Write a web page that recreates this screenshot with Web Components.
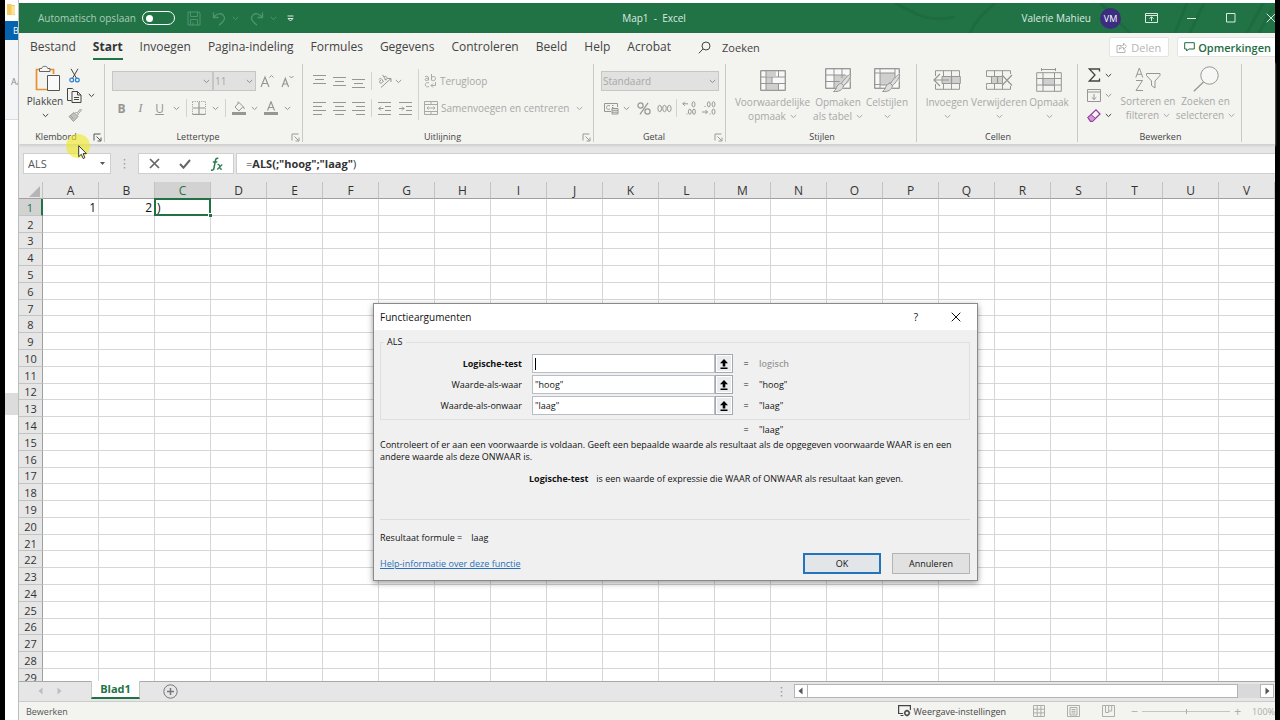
<!DOCTYPE html>
<html lang="nl">
<head>
<meta charset="utf-8">
<title>Map1 - Excel</title>
<style>
  html, body { margin: 0; height: 100%; background: #000; overflow: hidden; }
  body { font-family: "Open Sans", "Noto Sans", sans-serif; font-size: 10px; color: #444; }
</style>
</head>
<body>
<desktop-screen></desktop-screen>

<script>
const RESET = `
  *, *::before, *::after { box-sizing: border-box; }
  button, input, select { font: inherit; color: inherit; margin: 0; padding: 0; border: 0; background: none; border-radius: 0; outline: 0; }
  button { display: flex; align-items: center; justify-content: center; white-space: nowrap; }
`;

class Part extends HTMLElement {
  constructor() {
    super();
    this.attachShadow({ mode: 'open' });
  }
  connectedCallback() {
    if (this.shadowRoot.childNodes.length) return;
    const t = document.createElement('template');
    t.innerHTML = `<style>${RESET}${this.css()}</style>${this.html()}`;
    this.shadowRoot.append(t.content.cloneNode(true));
  }
  css() { return ':host{display:block}'; }
  html() { return '<slot></slot>'; }
  attr(n) { return this.getAttribute(n) || ''; }
}

/* name: [width, height, markup] */
const ICONS = {
  chevron: [7, 5, '<path d="M.8 1l2.7 2.6L6.200 1" />'],
  launcher: [9, 9, '<path d="M1 7.500V1h6.500M3.500 3.500l4 4M8 4.500V8H4.500"/>'],
  folder: [8, 11, '<path d="M0 0h4l1 1h3v10H0z" fill="#f4c95d" stroke="none"/><path d="M4.500 2h3.500v8l-3.500 1z" fill="#fbe29a" stroke="none"/>'],
  save: [14, 15, '<path d="M1 1h11l1 1v12H1zM3.500 1v4.500h7V1M3.500 14V8.500h7V14M6 14v-2.500"/>'],
  undo: [14, 15, '<path d="M1.500 1.500v5h5M1.500 6.500C4 3 8.500 1.500 11 4c2.500 2.500 1.500 5-.5 7L7 14.300" stroke-width="1.300"/>'],
  redo: [14, 15, '<path d="M12.500 1.500v5h-5M12.500 6.500C10 3 5.500 1.500 3 4C.5 6.500 1.500 9 3.500 11L7 14.300" stroke-width="1.300"/>'],
  customize: [7, 7, '<path d="M.5 1h6M1 3.500l2.500 2.500L6 3.500z"/>'],
  ribbonopts: [13, 11, '<path d="M.5.5h12v9H.5zM.5 2.500h12M6.500 8V4M4.500 5.700l2-2 2 2"/>'],
  minimize: [10, 10, '<path d="M1 5.500h9"/>'],
  maximize: [10, 10, '<path d="M.5.5h8.500v8.500H.5z"/>'],
  close: [10, 10, '<path d="M.7.7l8.600 8.600M9.300.7L.7 9.300"/>'],
  search: [13, 13, '<circle cx="8" cy="5" r="4"/><path d="M5 8L.8 12.300"/>'],
  share: [11, 11, '<path d="M5 3.500H1v7h8V7.500M3.300 7.500C3.500 4.500 5.500 3.300 7.500 3.300V1l3 3.300-3 3.200V5.500c-2 0-3 .5-4.200 2z"/>'],
  comment: [11, 10, '<path d="M.7.7h9.600v6.300H4.700L2.700 9V7H.7z"/>'],
  paste: [32, 28, '<g transform="translate(6 0)"><path d="M5 4.500H1.500v20h11M14 4.500h4.500V9" stroke="#e8912d" stroke-width="1.700"/><path d="M4.500 6.500v-3h2.200C7 .6 12.500.6 12.800 3.500H15v3z" fill="#f5f5f2" stroke="#666"/><path d="M12.500 10.500h12v15h-12z" fill="#fafafa" stroke="#555"/></g>'],
  cut: [11, 15, '<path d="M2 .8l5.500 9.500M9 .8L3.500 10.300" stroke="#444"/><circle cx="2.700" cy="12" r="1.900" stroke="#2b7cd3" stroke-width="1.200"/><circle cx="8.300" cy="12" r="1.900" stroke="#2b7cd3" stroke-width="1.200"/>'],
  copy: [15, 15, '<path d="M4.500 12.500h-4v-12h5l1 1" /><path d="M5 3.500h5.500l3.500 3.500v7.500H5zM10.500 3.500V7H14M7 9.500h5M7 11.500h5"/>'],
  brush: [14, 14, '<path d="M1 8.500L6 4.500l4 4-4.500 5z" fill="#c2c2c0"/><path d="M7 5.500l1.500-1.500 2 2L9.300 7.500M9.500 4.500L12.500 1l1 1-3 3.500M3 8l2.500 3"/>'],
  fontup: [14, 15, '<path d="M1 13L5 3l4 10M2.300 9.500h5.400" stroke-width="1.200"/><path d="M9.500 3.500l2-2 2 2"/>'],
  fontdown: [13, 14, '<path d="M1 13l3.300-8.500L7.600 13M2.200 10h4.200" stroke-width="1.200"/><path d="M8.500 2l2 2 2-2"/>'],
  borders: [14, 14, '<path d="M.5.5h13v13H.5z" stroke-dasharray="1 1.200"/><path d="M7 1v12M1 7h12" stroke-width="1.200"/><path d="M.5 13.500h13" stroke-width="1.300"/>'],
  fill: [14, 14, '<path d="M3 6l4-4.500 4 4-4 4.500zM6 2.500V.5M11 5.500l1.500 2.500"/><path d="M0 12.500h14" stroke-width="3"/>'],
  fontcolor: [14, 14, '<path d="M3.500 9.500L7 .8l3.500 8.700M4.500 6.500h5" stroke-width="1.200"/><path d="M0 12.500h14" stroke-width="3"/>'],
  top: [13, 13, '<path d="M0 .5h13M2 4.500h9M0 8.500h13"/>'],
  middle: [13, 13, '<path d="M0 2.500h13M2 6.500h9M0 10.500h13"/>'],
  bottom: [13, 13, '<path d="M0 4.500h13M2 8.500h9M0 12.500h13"/>'],
  left: [13, 13, '<path d="M0 .5h13M0 4.500h9M0 8.500h13M0 12.500h9"/>'],
  center: [13, 13, '<path d="M0 .5h13M2 4.500h9M0 8.500h13M2 12.500h9"/>'],
  right: [13, 13, '<path d="M0 .5h13M4 4.500h9M0 8.500h13M4 12.500h9"/>'],
  orient: [16, 14, '<path d="M4 13.500L14 4.500M10.500 4.500H14V8"/><path d="M2 5.500c1-1.500 2-1.500 3 0L6.500 8M4 6.200C2.500 6.500 2 8 3 8.800s2.300.2 2.600-1M5.500.8l3.600 5.500M7 3c1.500-1.500 3.500 0 3 1.500S7.800 6.500 8 5"/>'],
  outdent: [13, 13, '<path d="M0 .5h13M7 4.500h6M7 8.500h6M0 12.500h13M5.500 6.500H.8M2.800 4.500l-2 2 2 2"/>'],
  indent: [13, 13, '<path d="M0 .5h13M7 4.500h6M7 8.500h6M0 12.500h13M0 6.500h5M3 4.500l2 2-2 2"/>'],
  wrap: [13, 14, '<path d="M1 2.800c1.500-1 3.500-.6 3.500 1V6.500M4.500 4.300C2 4 .8 5 1.200 6s2.600.8 3.300-.8M7.500 0v6.500M7.500 4c0-2 4-2.200 4 .6s-4 2.600-4 .4M5 9C3 8 1.300 9 1.300 10.700S3.300 13.500 5 12.500M11.500 8v3.500H7M9 9.500l-2 2 2 2"/>'],
  merge: [14, 14, '<path d="M.5.5h13v13H.5zM.5 3.500h13M.5 10.500h13M7 .5v3M7 10.500v3M3 7h8M4.500 5.500L3 7l1.500 1.500M9.500 5.500L11 7 9.500 8.500"/>'],
  currency: [15, 13, '<path d="M7 9.500H.5v-8h13V5M6 4c-2-1.200-3.500 0-3.500 1.500S4 8 6 7M9.500 3.500H8M8 5.500h1.500"/><path d="M8 6.500h6v5.500H8zM8 8.300h6M8 10.200h6"/>'],
  percent: [14, 13, '<circle cx="3.500" cy="3.500" r="2.600" stroke-width="1.200"/><circle cx="10.500" cy="9.500" r="2.600" stroke-width="1.200"/><path d="M11 .8L3 12.300" stroke-width="1.200"/>'],
  thousands: [15, 9, '<ellipse cx="2.700" cy="4.500" rx="1.800" ry="3.200"/><ellipse cx="7.500" cy="4.500" rx="1.800" ry="3.200"/><ellipse cx="12.300" cy="4.500" rx="1.800" ry="3.200"/>'],
  moredec: [14, 14, '<path d="M6 2.800H.8M2.800.8l-2 2 2 2M5 12.500v1"/><ellipse cx="11.500" cy="3.300" rx="1.500" ry="2.600"/><ellipse cx="7.800" cy="10.700" rx="1.400" ry="2.600"/><ellipse cx="12" cy="10.700" rx="1.400" ry="2.600"/>'],
  lessdec: [14, 14, '<path d="M0 11h5.500M3.500 9l2 2-2 2M3 5v1M8 12.500v1"/><ellipse cx="6.800" cy="3.300" rx="1.400" ry="2.600"/><ellipse cx="11.500" cy="3.300" rx="1.400" ry="2.600"/><ellipse cx="11.500" cy="10.700" rx="1.500" ry="2.600"/>'],
  conditional: [26, 21, '<path d="M.7.7h24.600v19.600H.7z" fill="#f8f8f8"/><path d="M6 1h10v5H6zM6 7h6v6H6zM6 14h12v6H6z" fill="#cfcfcd" stroke="none"/><path d="M.7.7h24.600v19.600H.7zM.7 7h24.600M.7 13.500h24.600M6 .7v19.600M18.500 .7V7M18.500 13.500v7M12 7v6.500"/>'],
  astable: [27, 25, '<path d="M.7.7h24.600v19.600H.7z" fill="#f8f8f8"/><path d="M9 7h16v6L17 20H9z" fill="#cfcfcd" stroke="none"/><path d="M14 20.300H.7V.7h24.600V7M.7 7h20M.7 13.500h14M9 .7v19.600M17 .7V10M25.300 14v6.300H19"/><path d="M25.500 6.500c1.500 1-4 9-7 11l-2-2c1.500-3 7.500-9.500 9-9zM16.500 15.500l2 2.200c-.5 4.300-5 6.300-10 5.800 2.500-1.500 2.500-3 3.700-5.500 1.300-2 2.800-2.600 4.300-2.500z" fill="#dededc"/>'],
  styles: [27, 25, '<path d="M.7.7h24.600v19.600H.7z" fill="#f8f8f8"/><path d="M6 5h15v10h-6v2H6z" fill="#cfcfcd"/><path d="M12 20.300H.7V.7h24.600V5M.7 5h5M.7 16.500h5M6 .7V5M6 16v4M21 .7V5M25.300 14v6.300H19"/><path d="M25.500 6.500c1.500 1-4 9-7 11l-2-2c1.500-3 7.500-9.500 9-9zM16.500 15.500l2 2.200c-.5 4.300-5 6.300-10 5.800 2.500-1.500 2.500-3 3.700-5.500 1.300-2 2.800-2.600 4.300-2.500z" fill="#dededc"/>'],
  insertcells: [28, 20, '<path d="M2.500 6V.7h24V6M2.500 14v5.300h24V14M10.500.7V6M18.500.7V6M10.500 14v5.300M18.500 14v5.300"/><path d="M9 6.500h18.300v7H9z" fill="#cfcfcd"/><path d="M18.500 6.500v7M16 10H1M7 4l-6 6 6 6" stroke-width="1.200"/>'],
  deletecells: [28, 20, '<path d="M1.500 4V.7h24V4M1.500 15.500v3.800h24V16M9.500.7V6M17.500.7V6M9.500 14v5.300M17.500 14v5.300M1.500 4v2.500h6M1.500 15.500v-2h6"/><path d="M6.500 6.500h11v7h-11z" fill="#cfcfcd"/><path d="M17 5l10 10.500M27 5L17 15.500M12.500 6.500v7" stroke-width="1.200"/>'],
  formatcells: [26, 24, '<path d="M5.500 1.500h14M5.500 0v3M19.500 0v3M.7 4.700h24.600v18.600H.7zM.7 10.500h24.600M.7 17h24.600M7 4.700v18.600M18.500 4.700v18.600"/><path d="M7 10.500h11.500V17H7z" fill="#cfcfcd"/>'],
  sum: [13, 14, '<path d="M11.500 3.500V1H1.300l5.700 6-5.700 6h10.200v-2.500" stroke-width="1.300"/>'],
  filldown: [14, 13, '<path d="M.5.5h13v12H.5zM.5 3h13M7 5v5.500M4.700 8.300L7 10.500l2.300-2.200"/>'],
  eraser: [14, 13, '<path d="M1 8.500L9 .8 13 5l-7.500 7.300H3.500z" fill="#fdf5fd" stroke="#8f3f9c" stroke-width="1.200"/><path d="M1 8.500L4 5.500l4.500 4-3 2.800H3.500z" fill="#d59ad9" stroke="#8f3f9c"/>'],
  sortfilter: [26, 25, '<path d="M.8 10.500L4.300 1l3.500 9.500M2 7.300h4.600M1 13.500h6.500L1 23.500h7" /><path d="M11.500 6.500h13.500v2l-5 5.500v7l-3.500-2.500V14l-5-5.500z"/>'],
  find: [26, 26, '<circle cx="16.500" cy="9.500" r="8.700" fill="#f7f7f6"/><path d="M10.500 16L.8 25.200" stroke-width="1.300"/>'],
  cancel: [11, 11, '<path d="M1 1l9 9M10 1l-9 9" stroke-width="1.700"/>'],
  check: [12, 10, '<path d="M1 5l3.500 3.700L11 1" stroke-width="2"/>'],
  fx: [13, 14, '<path d="M8.300 1.500C6.500.5 5.700 2 5.300 4L4 11c-.4 2-1.300 2.500-3 2M2.800 5h4.500" stroke-width="1.500"/><path d="M7.500 7.500c1.500-.5 2 .5 2.300 2.500s.8 2.500 2.200 2M12.200 7.500L7.300 12.500" stroke-width="1.200"/>'],
  dropfill: [7, 4, '<path d="M1 0h5L3.500 3z" fill="currentColor" stroke="none"/>'],
  dots: [3, 14, '<path d="M1.500 2v10" stroke-width="1.500" stroke-dasharray="1.500 2.500"/>'],
  triup: [11, 11, '<path d="M11 0v11H0z" fill="#b5b5b5" stroke="none"/>'],
  triL: [5, 8, '<path d="M4.500.5v7L.5 4z" fill="currentColor" stroke="none"/>'],
  triR: [5, 8, '<path d="M.5.5v7l4-3.500z" fill="currentColor" stroke="none"/>'],
  plus: [15, 15, '<circle cx="7.500" cy="7.500" r="6.700"/><path d="M7.500 4v7M4 7.500h7" stroke-width="1.500"/>'],
  display: [13, 12, '<path d="M5 8.500H.6V.6h11.800V5M2.500 10.500h3" stroke-width="1.200"/><circle cx="9" cy="8" r="2.200" stroke-width="1.400"/><path d="M9 4.700v1.300M9 10v1.500M5.800 8h1.400M10.800 8h1.400"/>'],
  normal: [12, 12, '<path d="M.5.5h11v11H.5zM4.200.5v11M7.900.5v11M.5 4.200h11M.5 7.900h11"/>'],
  layout: [13, 12, '<path d="M.5.5h12v11H.5zM3 2.500h7v7.500H3zM4.500 4.500h4M4.500 6.300h4M4.500 8h4"/>'],
  breaks: [13, 12, '<path d="M.5.5h12v11H.5zM3.500.5v7h3.200V.5M6.700 6h3V.5"/>'],
  collapse: [8, 10, '<path d="M4 0l4 4.200H5.300V7.500H2.700V4.200H0zM.5 8.500h7V10h-7z" fill="#000" stroke="none"/>'],
  arrow: [9, 14, '<path d="M.7.7v11l2.600-2.400 1.900 4.200 1.700-.8L5.100 8.600h3.300z" fill="#fff" stroke="#222" stroke-width=".9"/>'],
};

customElements.define('x-icon', class extends Part {
  css() { return ':host{display:inline-flex;flex:none} svg{display:block;fill:none;stroke:currentColor;stroke-width:1}'; }
  html() {
    const [w, h, m] = ICONS[this.attr('name')];
    return `<svg width="${w}" height="${h}" viewBox="0 0 ${w} ${h}" aria-hidden="true">${m}</svg>`;
  }
});

/* icon button; text may be slotted beside the icon */
customElements.define('tool-button', class extends Part {
  css() { return `:host{display:inline-flex} button{gap:3px;height:20px}`; }
  html() {
    const icon = this.attr('icon') ? `<x-icon name="${this.attr('icon')}"></x-icon>` : '';
    return `<button type="button" aria-label="${this.attr('label')}">${icon}<slot></slot></button>`;
  }
});

/* tall ribbon button: icon above one or two lines of text */
customElements.define('big-button', class extends Part {
  css() { return `
    :host{display:block;color:#a8a8a6}
    button{flex-direction:column;justify-content:flex-start;width:100%;line-height:14px}
    .pic{display:flex;align-items:center;justify-content:center;height:30px;color:#969694}
    .line{display:flex;align-items:center;gap:4px;height:14px}`; }
  html() {
    return `<button type="button"><span class="pic"><x-icon name="${this.attr('icon')}"></x-icon></span>
      <span class="line">${this.attr('line1')}</span>
      <span class="line">${this.attr('line2')}<x-icon name="chevron"></x-icon></span></button>`;
  }
});

customElements.define('ribbon-group', class extends Part {
  css() { return `
    :host{display:flex;flex-direction:column;justify-content:space-between;margin:3px 0 2px;border-right:1px solid #c9c9c7;min-width:0}
    footer{display:flex;align-items:center;height:10px;line-height:10px;font-size:9px;color:#444;padding:0 2px 0 0}
    :host(:not([launcher])) footer{padding-left:4px}
    footer span{flex:1;text-align:center}
    footer button{height:9px;width:9px;color:var(--launcher,#999)}`; }
  html() {
    const launch = this.hasAttribute('launcher')
      ? `<button type="button" aria-label="${this.attr('label')} opties"><x-icon name="launcher"></x-icon></button>` : '';
    return `<div><slot></slot></div><footer><span>${this.attr('label')}</span>${launch}</footer>`;
  }
});

customElements.define('drop-down', class extends Part {
  css() { return `
    :host{display:block;position:relative;width:100%;color:#a8a8a6}
    select{appearance:none;width:100%;height:20px;padding:0 4px 0 1px;background:#e1e1df;border:1px solid #c6c6c4;opacity:1}
    x-icon{position:absolute;right:3px;top:8px;color:#8e8e8c}`; }
  html() {
    return `<select disabled aria-label="${this.attr('label')}"><option>${this.attr('value')}</option></select><x-icon name="chevron"></x-icon>`;
  }
});

customElements.define('title-bar', class extends Part {
  css() { return `
    :host{display:grid;grid-template-columns:1fr auto 1fr;align-items:center;height:30px;background:#217346;color:#dcebe2;overflow:hidden;position:relative}
    .art{position:absolute;right:0;top:0;stroke:#1b6038;fill:none;opacity:.4}
    .left,.right{display:flex;align-items:center;position:relative}
    .left{padding-left:19px}
    label{display:flex;align-items:center;gap:6px;color:#a9cdb8}
    input{appearance:none;width:33px;height:14px;border:1px solid #fff;border-radius:7px;display:flex;align-items:center;padding-left:3px}
    input::before{content:"";width:7px;height:7px;border-radius:50%;background:#fff}
    .quick{display:flex;align-items:center;color:#4f9470;margin-left:12px;gap:6px}
    .quick .gap{margin-left:5px}
    .quick .more{color:#dcebe2;margin-left:4px}
    .title{white-space:pre;padding-left:14px;position:relative}
    .right{justify-content:flex-end;margin-right:-16px}
    .avatar{width:21px;height:21px;border-radius:50%;background:#3b2e7e;color:#fff;font-size:9px;display:grid;place-items:center;margin:0 10px 0 9px}
    .win{width:40px;height:30px}`; }
  html() { return `
    <svg class="art" width="400" height="30" aria-hidden="true"><path d="M20 0c20 10 30 20 60 14M95 30c5-12 14-20 25-30M225 0l30 30M300 30l12-30M315 30l14-30M372 30l16-30M384 30l14-26" stroke-width="3"/></svg>
    <div class="left">
      <label>Automatisch opslaan <input type="checkbox" role="switch"></label>
      <div class="quick">
        <tool-button icon="save" label="Opslaan"></tool-button>
        <tool-button class="gap" icon="undo" label="Ongedaan maken"></tool-button>
        <tool-button icon="chevron" label="Lijst ongedaan maken"></tool-button>
        <tool-button class="gap" icon="redo" label="Opnieuw"></tool-button>
        <tool-button icon="chevron" label="Lijst opnieuw"></tool-button>
        <tool-button class="more" icon="customize" label="Werkbalk aanpassen"></tool-button>
      </div>
    </div>
    <div class="title">Map1  -  Excel</div>
    <div class="right">
      <span>Valerie Mahieu</span><span class="avatar">VM</span>
      <button class="win" type="button" aria-label="Weergaveopties voor lint"><x-icon name="ribbonopts"></x-icon></button>
      <button class="win" type="button" aria-label="Minimaliseren"><x-icon name="minimize"></x-icon></button>
      <button class="win" type="button" aria-label="Maximaliseren"><x-icon name="maximize"></x-icon></button>
      <button class="win" type="button" aria-label="Sluiten"><x-icon name="close"></x-icon></button>
    </div>`; }
});

customElements.define('ribbon-tabs', class extends Part {
  css() { return `
    :host{display:flex;align-items:center;height:28px;background:#f3f3f0;font-size:12px;overflow:hidden;padding-left:11px}
    nav{display:flex;gap:17px;margin-right:27px}
    a{color:#444;text-decoration:none;line-height:22px;height:26px;padding-top:2px}
    a.on{font-weight:700;color:#333;border-bottom:2px solid #217346}
    .find{display:flex;align-items:center;gap:11px;font-size:11px}
    .find input{width:60px;height:20px}
    .find input::placeholder{color:#444;opacity:1}
    .actions{display:flex;gap:8px;margin-left:auto;margin-right:-4px;font-size:11px}
    .actions button{height:20px;background:#fff;border:1px solid #e4e4e2;border-radius:2px;padding:0 7px 0 6px;gap:4px;color:#b4b4b2}
    .actions .notes{color:#1e6b41;font-weight:600;gap:3px}`; }
  html() {
    const names = ['Bestand','Start','Invoegen','Pagina-indeling','Formules','Gegevens','Controleren','Beeld','Help','Acrobat'];
    return `<nav>${names.map(n => `<a href="#"${n === 'Start' ? ' class="on"' : ''}>${n}</a>`).join('')}</nav>
      <label class="find"><x-icon name="search"></x-icon><input type="text" aria-label="Zoeken" placeholder="Zoeken"></label>
      <div class="actions"><button type="button"><x-icon name="share"></x-icon>Delen</button><button type="button" class="notes"><x-icon name="comment"></x-icon>Opmerkingen</button></div>`;
  }
});

customElements.define('ribbon-bar', class extends Part {
  css() { return `
    :host{display:grid;grid-template-columns:86fr 198fr 291fr 132fr 191fr 161fr 164fr 33fr;height:83px;background:#f3f3f0;box-shadow:0 2px 2px #cfcfcd;position:relative;color:#969694}
    .row{display:grid;place-items:center;height:20px}
    .two{display:grid;row-gap:7px;padding:7px 0 0 7px}
    .clip{display:grid;grid-template-columns:36px 15px 1fr;column-gap:4px;padding-left:8px;color:#444}
    .clip big-button{color:#444}
    .small{display:grid;grid-template-columns:15px 12px;column-gap:3px;grid-auto-rows:20px;place-items:center;padding-top:1px}
    .clip .small{grid-column:2/4;justify-content:start}
    .dim{color:#9c9c9a}
    .font1{grid-template-columns:101px 43px 21px 20px}
    .font2{grid-template-columns:19px 19px 19px 14px 6px 20px 12px 8px 19px 12px 22px 11px}
    .align{display:grid;grid-template-columns:19px 20px 19px 6px 21px 20px 6px 1fr;grid-template-rows:20px 20px;row-gap:7px;place-items:center;padding:7px 0 0 7px}
    .align .text{justify-self:start;padding-left:3px;display:flex;gap:7px;align-items:center;color:#a8a8a6}
    .start{justify-self:start}
    .num1{grid-template-columns:118px}
    .num2{grid-template-columns:20px 11px 23px 18px 6px 20px 20px}
    .sep{width:1px;height:18px;background:#d2d2d0}
    .tall{height:51px;grid-row:1/3;grid-column:7}
    .bigs{display:grid;justify-content:center;padding-top:1px}
    .styles{grid-template-columns:82px 49px 49px;padding-left:1px}
    .cells{grid-template-columns:49px 55px 45px}
    .edit{display:grid;grid-template-columns:32px 58px 57px;padding-left:9px}
    .edit .small{grid-template-columns:14px 7px;column-gap:4px;justify-content:start}
    .b{font-size:12px;font-weight:700}.i{font:italic 13px "Liberation Serif",serif}.u{font-size:12px;text-decoration:underline}
    .dark{color:#444}`; }
  html() {
    const t = (icon, label, cls = '') => `<tool-button icon="${icon}" label="${label}" class="${cls}"></tool-button>`;
    const c = (label, cls = '') => t('chevron', label, cls);
    return `
    <ribbon-group label="Klembord" launcher style="--launcher:#555"><div class="clip">
      <big-button icon="paste" line1="Plakken" line2=""></big-button>
      <div class="small">${t('cut','Knippen')}<i></i>${t('copy','Kopiëren')}${c('Kopieeropties')}${t('brush','Opmaak kopiëren','dim')}</div></div></ribbon-group>
    <ribbon-group label="Lettertype" launcher><div class="two">
      <div class="row font1"><drop-down label="Lettertype" value=""></drop-down><drop-down label="Tekengrootte" value="11"></drop-down>${t('fontup','Groter')}${t('fontdown','Kleiner')}</div>
      <div class="row font2"><tool-button label="Vet"><span class="b">B</span></tool-button><tool-button label="Cursief"><span class="i">I</span></tool-button><tool-button label="Onderstrepen"><span class="u">U</span></tool-button>${c('Onderstreping')}<span class="sep"></span>${t('borders','Randen')}${c('Randopties')}<span class="sep"></span>${t('fill','Opvulkleur')}${c('Opvulkleuren')}${t('fontcolor','Tekstkleur')}${c('Tekstkleuren')}</div>
    </div></ribbon-group>
    <ribbon-group label="Uitlijning" launcher><div class="align">
      ${t('top','Boven')}${t('middle','Midden')}${t('bottom','Onder')}<span class="sep"></span>${t('orient','Afdrukstand')}${c('Afdrukstanden','start')}<span class="sep tall"></span>
      <div class="text"><tool-button icon="wrap" label="Terugloop">Terugloop</tool-button></div>
      ${t('left','Links')}${t('center','Centreren')}${t('right','Rechts')}<span class="sep"></span>${t('outdent','Inspringing verkleinen')}${t('indent','Inspringing vergroten')}
      <div class="text"><tool-button icon="merge" label="Samenvoegen en centreren">Samenvoegen en centreren</tool-button>${c('Samenvoegopties')}</div>
    </div></ribbon-group>
    <ribbon-group label="Getal" launcher><div class="two">
      <div class="row num1"><drop-down label="Getalnotatie" value="Standaard"></drop-down></div>
      <div class="row num2">${t('currency','Valuta')}${c('Valutaopties')}${t('percent','Procent')}${t('thousands','Duizendtallen')}<span class="sep"></span>${t('moredec','Meer decimalen')}${t('lessdec','Minder decimalen')}</div>
    </div></ribbon-group>
    <ribbon-group label="Stijlen"><div class="bigs styles">
      <big-button icon="conditional" line1="Voorwaardelijke" line2="opmaak"></big-button>
      <big-button icon="astable" line1="Opmaken" line2="als tabel"></big-button>
      <big-button icon="styles" line1="Celstijlen" line2=""></big-button></div></ribbon-group>
    <ribbon-group label="Cellen"><div class="bigs cells">
      <big-button icon="insertcells" line1="Invoegen" line2=""></big-button>
      <big-button icon="deletecells" line1="Verwijderen" line2=""></big-button>
      <big-button icon="formatcells" line1="Opmaak" line2=""></big-button></div></ribbon-group>
    <ribbon-group label="Bewerken"><div class="edit">
      <div class="small">${t('sum','AutoSom','dark')}${c('Somopties','dark')}${t('filldown','Doorvoeren')}${c('Doorvoeropties')}${t('eraser','Wissen')}${c('Wisopties','dark')}</div>
      <big-button icon="sortfilter" line1="Sorteren en" line2="filteren"></big-button>
      <big-button icon="find" line1="Zoeken en" line2="selecteren"></big-button></div></ribbon-group>`;
  }
});

customElements.define('formula-bar', class extends Part {
  css() { return `
    :host{display:flex;align-items:center;height:38px;background:#e6e6e6;padding:1px 0 0 4px;font-size:11px}
    .name,.keys,.formula{height:21px;background:#fff;border:1px solid #cfcfcf;display:flex;align-items:center}
    .name{width:88px;padding:0 4px;color:#555}
    .name input{flex:1;min-width:0}
    .dots{width:27px;display:flex;justify-content:center;color:#a0a0a0}
    .keys{width:96px;justify-content:space-around;color:#666}
    .fx{color:#2e7d52}
    .formula{flex:1;margin-left:2px;padding-left:9px;border-right:0;color:#333;white-space:pre}
    b{font-weight:700}`; }
  html() { return `
    <div class="name"><input aria-label="Naamvak" value="ALS"><x-icon name="dropfill"></x-icon></div>
    <div class="dots"><x-icon name="dots"></x-icon></div>
    <div class="keys"><tool-button icon="cancel" label="Annuleren"></tool-button><tool-button icon="check" label="Invoeren"></tool-button><tool-button class="fx" icon="fx" label="Functie invoegen"></tool-button></div>
    <div class="formula">=<b>ALS(;"hoog";"laag"</b>)</div>`; }
});

customElements.define('sheet-grid', class extends Part {
  css() { return `
    :host{display:block;flex:1;min-height:0;overflow:hidden;background:#fff;font-size:12px;position:relative}
    table{table-layout:fixed;width:100%;height:calc(100% + 5px);border-collapse:separate;border-spacing:0;line-height:12px}
    th,td{padding:2px 0 0;font-weight:400;border-right:1px solid #d6d6d6;border-bottom:1px solid #d6d6d6}
    thead th{height:17px;background:#e6e6e6;border-right-color:#c3c3c3;border-bottom-color:#a0a0a0;color:#333}
    thead th.on{background:#d2d2d2;color:#217346;border-bottom-color:#217346}
    thead x-icon{display:flex;justify-content:flex-end;padding-right:2px}
    col.head{width:24px}
    tbody th{background:#e6e6e6;border-right-color:#a0a0a0;border-bottom-color:#c3c3c3;color:#333;font-size:11px}
    tbody th.on{background:#d2d2d2;color:#217346;border-right:2px solid #217346}
    td{color:#111;text-align:right;padding-right:2px}
    td.edit{position:relative;text-align:left;padding-left:2px}
    td.edit::before{content:"";position:absolute;inset:-1px -1px -1px -1px;border:2px solid #217346}
    td.edit::after{content:"";position:absolute;right:-2px;bottom:-2px;width:4px;height:4px;background:#217346;border-left:1px solid #fff;border-top:1px solid #fff}`; }
  html() {
    const cols = [...'ABCDEFGHIJKLMNOPQRSTUV'];
    const values = { A1: '1', B1: '2', C1: ')' };
    let rows = '';
    for (let r = 1; r <= 29; r++) {
      rows += `<tr><th scope="row"${r === 1 ? ' class="on"' : ''}>${r}</th>` +
        cols.map(c => `<td${c + r === 'C1' ? ' class="edit"' : ''}>${values[c + r] || ''}</td>`).join('') + '</tr>';
    }
    return `<table><colgroup><col class="head">${cols.map(() => '<col>').join('')}</colgroup>
      <thead><tr><th aria-label="Alles selecteren"><x-icon name="triup"></x-icon></th>${cols.map(c => `<th scope="col"${c === 'C' ? ' class="on"' : ''}>${c}</th>`).join('')}</tr></thead>
      <tbody>${rows}</tbody></table>`;
  }
});

customElements.define('sheet-tabs', class extends Part {
  css() { return `
    :host{display:flex;height:20px;background:#e6e6e6;align-items:flex-start;box-shadow:inset 0 1px #a8a8a8;color:#bdbdbd;position:relative}
    .nav{display:flex;gap:14px;padding-left:19px;width:72px}
    .tab{height:18px;width:49px;background:#fff;color:#217346;font-weight:700;font-size:11px;line-height:16px;text-align:center;text-decoration:none;border-bottom:2px solid #217346;border-left:1px solid #c8c8c8;border-right:1px solid #c8c8c8}
    .add{margin-left:23px;color:#777}
    .dots{margin-left:auto;margin-right:11px;padding-top:4px;color:#a0a0a0}
    .scroll{display:flex;flex:0 1 calc(38% + 3px);height:14px;margin:3px 1px 0 0;background:#d9d9d9;color:#555}
    .scroll button{width:14px;background:#fff;border:1px solid #b4b4b4}
    .thumb{flex:1;background:#fff;border:1px solid #b4b4b4;border-left:0;margin-right:22px}`; }
  html() { return `
    <div class="nav"><tool-button icon="triL" label="Vorig blad"></tool-button><tool-button icon="triR" label="Volgend blad"></tool-button></div>
    <a class="tab" href="#">Blad1</a>
    <tool-button class="add" icon="plus" label="Nieuw blad"></tool-button>
    <x-icon class="dots" name="dots"></x-icon>
    <div class="scroll"><button type="button" aria-label="Naar links"><x-icon name="triL"></x-icon></button><div class="thumb"></div><button type="button" aria-label="Naar rechts"><x-icon name="triR"></x-icon></button></div>`; }
});

customElements.define('status-bar', class extends Part {
  css() { return `
    :host{display:flex;align-items:center;height:19px;background:#f3f3f0;border-top:1px solid #cbcbcb;font-size:9px;padding-left:7px;overflow:hidden;color:#555;white-space:nowrap}
    .right{margin-left:auto;display:flex;align-items:center;color:#adadab}
    .display{color:#444;margin-right:27px}
    .views{display:flex;gap:22px;margin-right:16px}
    .zoom{display:flex;align-items:center;gap:4px;margin-right:11px}
    input{appearance:none;width:88px;height:11px;background:linear-gradient(#c4c4c2,#c4c4c2) center/100% 1px no-repeat}
    input::-webkit-slider-thumb{appearance:none;width:1px;height:5px;background:#adadab}
    .zoom button{width:7px;height:11px;font-size:12px;line-height:11px}`; }
  html() { return `
    <span>Bewerken</span>
    <div class="right">
      <tool-button class="display" icon="display" label="Weergave-instellingen">Weergave-instellingen</tool-button>
      <div class="views"><tool-button icon="normal" label="Normaal"></tool-button><tool-button icon="layout" label="Pagina-indeling"></tool-button><tool-button icon="breaks" label="Pagina-eindevoorbeeld"></tool-button></div>
      <div class="zoom"><button type="button" aria-label="Uitzoomen">−</button><input type="range" aria-label="Zoom" value="50"><button type="button" aria-label="Inzoomen">+</button></div>
      <span>100%</span>
    </div>`; }
});

customElements.define('argument-row', class extends Part {
  css() { return `
    :host{display:grid;grid-template-columns:142px 183px 18px 26px 1fr;align-items:center;height:19px}
    label{text-align:right;padding-right:10px}
    :host([active]) label{font-weight:700}
    :host([active]) .value{color:#9a9a9a;font-weight:600}
    .box{display:flex;align-items:center;height:19px;background:#fff;border:1px solid #b9bec4}
    input{flex:1;min-width:0;padding-left:2px}
    .caret{width:1px;height:12px;background:#000;margin-left:2px}
    button{height:19px;background:#e9ecef;border:1px solid #a3a9af;box-shadow:inset 0 0 0 1px #fff}
    .eq{text-align:center}`; }
  html() {
    const on = this.hasAttribute('active');
    return `<label for="v">${this.attr('name')}</label>
      <div class="box">${on ? '<span class="caret"></span>' : ''}<input id="v" type="text" value='${this.attr('value')}'></div>
      <button type="button" aria-label="Bereik kiezen"><x-icon name="collapse"></x-icon></button>
      <span class="eq">=</span><span class="value">${this.attr('result')}</span>`;
  }
});

customElements.define('function-dialog', class extends Part {
  css() { return `
    :host{display:block;background:#f0f0f0;border:1px solid #8a8a8a;box-shadow:0 2px 6px #0006;font-size:9px;color:#111}
    header{display:flex;align-items:center;height:26px;background:#fff;padding:0 1px 1px 6px;font-size:10px}
    header span{flex:1}
    header button{width:40px;height:24px}
    .body{padding:5px 7px 0 6px}
    fieldset{margin:0;padding:5px 0 4px 9px;border:1px solid #dfdfdf;display:grid;row-gap:2px;min-width:0}
    legend{padding:0 4px 0 3px;margin-left:-6px;line-height:14px}
    .result{display:grid;grid-template-columns:26px 1fr;margin:3px 0 0 353px;line-height:14px}
    .result span{text-align:center}
    p{margin:2px 0 0;line-height:12px}
    .arg{margin:10px 0 0 149px;display:flex;gap:8px}
    hr{border:0;border-top:1px solid #dcdcdc;margin:34px 0 0}
    .outcome{margin-top:12px;display:flex;gap:9px}
    footer{display:flex;align-items:center;gap:11px;padding:9px 0 6px}
    footer a{color:#2a6fb8;margin-right:auto}
    footer button{width:78px;height:21px;background:#e1e1e1;border:1px solid #b4b4b4}
    footer .ok{border:2px solid #2473bd;background:#e3e6e9}`; }
  html() { return `
    <header><span>Functieargumenten</span><button type="button" aria-label="Help">?</button><button type="button" aria-label="Sluiten"><x-icon name="close"></x-icon></button></header>
    <div class="body">
      <fieldset><legend>ALS</legend>
        <argument-row active name="Logische-test" value="" result="logisch"></argument-row>
        <argument-row name="Waarde-als-waar" value='&quot;hoog&quot;' result='&quot;hoog&quot;'></argument-row>
        <argument-row name="Waarde-als-onwaar" value='&quot;laag&quot;' result='&quot;laag&quot;'></argument-row>
      </fieldset>
      <div class="result"><span>=</span>"laag"</div>
      <p>Controleert of er aan een voorwaarde is voldaan. Geeft een bepaalde waarde als resultaat als de opgegeven voorwaarde WAAR is en een andere waarde als deze ONWAAR is.</p>
      <p class="arg"><b>Logische-test</b><span>is een waarde of expressie die WAAR of ONWAAR als resultaat kan geven.</span></p>
      <hr>
      <p class="outcome"><span>Resultaat formule =</span><span>laag</span></p>
      <footer><a href="#">Help-informatie over deze functie</a><button type="button" class="ok">OK</button><button type="button">Annuleren</button></footer>
    </div>`; }
});

/* sliver of the window behind Excel */
customElements.define('back-window', class extends Part {
  css() { return `
    :host{display:flex;flex-direction:column;background:#fff;overflow:hidden;font-size:9px;white-space:nowrap}
    .top{height:21px;padding:4px 0 0 2px}
    .menu{height:19px;line-height:19px;background:#0563af;color:#fff;padding-left:8px}
    .tools{height:80px;line-height:84px;background:#f3f5f6;border-bottom:1px solid #dadcde;color:#888;padding-left:6px}
    .bar{margin-top:273px;height:22px;background:#dcdcdc}`; }
  html() { return `<div class="top"><x-icon name="folder"></x-icon></div><div class="menu">B</div><div class="tools">Aa</div><div class="bar"></div>`; }
});

customElements.define('excel-window', class extends Part {
  css() { return `:host{display:flex;flex-direction:column;min-width:0;border-top:3px solid #fff;background:#e6e6e6;box-shadow:-1px 0 #b9bdbb;position:relative}`; }
  html() { return `<title-bar></title-bar><ribbon-tabs></ribbon-tabs><ribbon-bar></ribbon-bar><formula-bar></formula-bar><sheet-grid></sheet-grid><sheet-tabs></sheet-tabs><status-bar></status-bar>`; }
});

customElements.define('desktop-screen', class extends Part {
  css() { return `
    :host{display:grid;grid-template-columns:14px minmax(0,1fr);height:100vh;padding:0 5px;background:#000;position:relative;overflow:hidden}
    back-window,excel-window{min-height:0}
    function-dialog{position:absolute;left:373px;top:303px;width:605px}
    .pointer{position:absolute;left:66px;top:134px;width:24px;height:24px;border-radius:50%;background:#f0ea1e99;padding:11px 0 0 12px}`; }
  html() { return `<back-window></back-window><excel-window></excel-window><function-dialog role="dialog" aria-label="Functieargumenten"></function-dialog><div class="pointer"><x-icon name="arrow"></x-icon></div>`; }
});
</script>
</body>
</html>
